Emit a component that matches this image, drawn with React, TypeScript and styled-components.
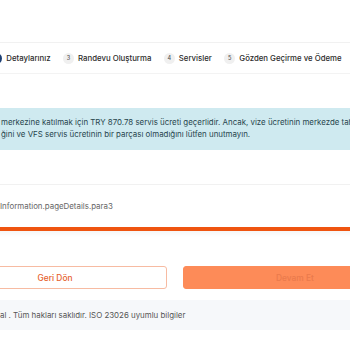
import React from 'react';
import styled, { createGlobalStyle } from 'styled-components';

const GlobalStyle = createGlobalStyle`
  html, body {
    margin: 0;
    padding: 0;
    background: #ffffff;
    overflow: hidden;
  }
  body {
    font-family: Inter, 'Noto Sans', 'Liberation Sans', sans-serif;
    color: #333333;
  }
`;

const Viewport = styled.div`
  width: 350px;
  height: 350px;
  display: flex;
  justify-content: center;
  overflow: hidden;
`;

const Column = styled.div`
  flex: 0 0 464px;
  width: 464px;
  display: flex;
  flex-direction: column;
`;

const StepperCard = styled.div`
  margin-top: 42px;
  border-top: 1px solid #f1f1f1;
  border-bottom: 1px solid #f3f3f3;
  height: 30px;
  display: flex;
  align-items: center;
`;

const StepRow = styled.ol`
  list-style: none;
  margin: 0 0 0 -47px;
  padding: 0;
  display: flex;
  align-items: center;
  gap: 12.5px;
  white-space: nowrap;
`;

const Step = styled.li`
  display: flex;
  align-items: center;
  gap: 4px;
  font-size: 7.8px;
  font-weight: 500;
  color: #2b2b2b;
`;

const StepDot = styled.span<{ $active?: boolean }>`
  width: 11px;
  height: 11px;
  border-radius: 50%;
  display: flex;
  align-items: center;
  justify-content: center;
  font-size: 5.5px;
  font-weight: 500;
  background: ${p => (p.$active ? '#1c3f74' : '#f0f0f0')};
  color: ${p => (p.$active ? '#ffffff' : '#555555')};
`;

const Alert = styled.div`
  margin-top: 34px;
  background: #cfeaf0;
  padding: 8px 12px 10px 58px;
  font-size: 7.9px;
  line-height: 12px;
  color: #27454d;
  white-space: nowrap;
`;

const DetailsCard = styled.div`
  margin-top: 34px;
  border-top: 1px solid #f1f1f1;
  border-bottom: 4px solid #ef5410;
  box-shadow: 0 3px 4px rgba(0, 0, 0, 0.04);
  padding: 16px 12px 16px 57px;
  font-size: 7.9px;
  color: #666666;
`;

const Actions = styled.div`
  margin-top: 35px;
  display: grid;
  grid-template-columns: 1fr 1fr;
  gap: 16px;
`;

const ActionButton = styled.button<{ $primary?: boolean }>`
  height: 23px;
  border-radius: 3px;
  font-family: inherit;
  font-size: 8.4px;
  font-weight: 500;
  cursor: pointer;
  border: 1px solid ${p => (p.$primary ? '#fd8b58' : '#f7bba2')};
  background: ${p => (p.$primary ? '#fd8b58' : '#ffffff')};
  color: ${p => (p.$primary ? '#ea7a4c' : '#e6612d')};
`;

const Footer = styled.footer`
  margin-top: 11px;
  background: #f6f8fa;
  height: 30px;
  display: flex;
  align-items: center;
  padding-left: 57px;
  font-size: 7.9px;
  color: #555555;
  white-space: nowrap;
`;

const steps = [
  { n: 1, label: 'Randevu Detayları', active: true },
  { n: 2, label: 'Detaylarınız', active: true },
  { n: 3, label: 'Randevu Oluşturma' },
  { n: 4, label: 'Servisler' },
  { n: 5, label: 'Gözden Geçirme ve Ödeme' },
];

export default function App() {
  return (
    <>
      <GlobalStyle />
      <Viewport>
        <Column>
          <StepperCard>
            <StepRow>
              {steps.map(s => (
                <Step key={s.n}>
                  <StepDot $active={s.active}>{s.n}</StepDot>
                  {s.label}
                </Step>
              ))}
            </StepRow>
          </StepperCard>

          <Alert>
            merkezine katılmak için TRY 870.78 servis ücreti geçerlidir. Ancak, vize ücretinin merkezde tahsil edileceğini
            <br />
            ğini ve VFS servis ücretinin bir parçası olmadığını lütfen unutmayın.
          </Alert>

          <DetailsCard>Information.pageDetails.para3</DetailsCard>

          <Actions>
            <ActionButton>Geri Dön</ActionButton>
            <ActionButton $primary disabled>
              Devam Et
            </ActionButton>
          </Actions>

          <Footer>al . Tüm hakları saklıdır. ISO 23026 uyumlu bilgiler</Footer>
        </Column>
      </Viewport>
    </>
  );
}
